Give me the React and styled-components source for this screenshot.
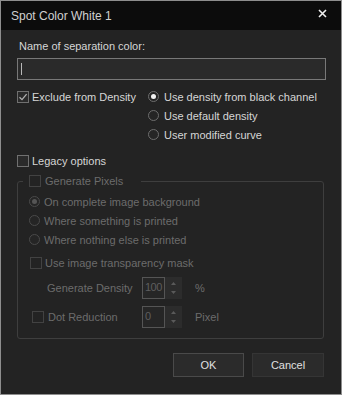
import React from 'react'
import styled, { createGlobalStyle } from 'styled-components'

const Global = createGlobalStyle`
  html, body {
    margin: 0;
    padding: 0;
    background: #232323;
  }
  * { box-sizing: border-box; }
`

const Window = styled.div`
  width: 342px;
  height: 395px;
  border: 1px solid #8e8e8e;
  background: #232323;
  display: flex;
  flex-direction: column;
  font-family: "Liberation Sans", Arial, sans-serif;
  font-size: 11px;
  color: #d6d6d6;
  white-space: nowrap;
`

const TitleBar = styled.div`
  height: 29px;
  background: #0c0c0c;
  display: flex;
  align-items: center;
  justify-content: space-between;
  padding: 0 14px 4px 10px;
`

const Title = styled.div`
  font-size: 12px;
  color: #d0d0d0;
  padding-top: 5px;
`

const Close = styled.div`
  width: 9px;
  height: 9px;
  margin-bottom: 1px;
  display: flex;
`

const Body = styled.div`
  display: flex;
  flex-direction: column;
  padding: 0 15px 0 16px;
`

const Label = styled.div`
  margin-top: 8px;
  line-height: 16px;
  padding-left: 2px;
`

const TextInput = styled.div`
  margin-top: 4px;
  height: 22px;
  border: 1px solid #787878;
  background: #2a2a2a;
  display: flex;
  align-items: center;
  padding-left: 3px;
`

const Caret = styled.span`
  width: 1px;
  height: 12px;
  background: #b8b8b8;
`

const DensityRow = styled.div`
  margin-top: 7px;
  display: grid;
  grid-template-columns: 131px 1fr;
`

const Column = styled.div`
  display: flex;
  flex-direction: column;
`

const Row = styled.div`
  height: ${p => p.h || 19}px;
  display: flex;
  align-items: center;
  gap: ${p => p.gap ?? 3}px;
  margin-top: ${p => p.mt || 0}px;
  padding-left: ${p => p.pl || 0}px;
  color: ${p => (p.disabled ? '#6c6c6c' : '#d6d6d6')};
`

const Box = styled.span`
  width: 12px;
  height: 12px;
  flex: none;
  border: 1px solid ${p => (p.disabled ? '#424242' : '#707070')};
  background: ${p => (p.disabled ? '#232323' : '#2a2a2a')};
  display: flex;
  align-items: center;
  justify-content: center;
`

const Radio = styled.span`
  width: 11px;
  height: 11px;
  flex: none;
  border-radius: 50%;
  border: 1px solid ${p => (p.disabled ? '#4a4a4a' : '#6e6e6e')};
  background: #252525;
  display: flex;
  align-items: center;
  justify-content: center;
  margin-right: 1px;
  &::after {
    content: '';
    display: ${p => (p.on ? 'block' : 'none')};
    width: 5px;
    height: 5px;
    border-radius: 50%;
    background: ${p => (p.disabled ? '#555' : '#f2f2f2')};
  }
`

const Group = styled.fieldset`
  margin: 4px 2px 0 0;
  padding: 4px 10px 10px 11px;
  border: 1px solid #3e3e3e;
  border-radius: 3px;
  min-width: 0;
`

const Legend = styled.legend`
  padding: 0 18px 0 6px;
  margin-left: -6px;
  height: 14px;
  display: flex;
  align-items: center;
  gap: 4px;
  color: #6c6c6c;
`

const FieldGrid = styled.div`
  display: grid;
  grid-template-columns: 113px 40px auto;
  align-items: center;
  margin-top: ${p => p.mt || 0}px;
  color: #6c6c6c;
`

const FieldLabel = styled.div`
  display: flex;
  align-items: center;
  gap: 4px;
  padding-left: ${p => p.pl || 0}px;
`

const Spin = styled.div`
  display: flex;
  height: 22px;
  width: 40px;
`

const SpinText = styled.div`
  width: 23px;
  border: 1px solid #555;
  background: #262626;
  color: #5e5e5e;
  padding: 2px 0 0 2px;
  line-height: 14px;
  overflow: hidden;
  letter-spacing: -0.5px;
`

const SpinButtons = styled.div`
  width: 17px;
  background: #2c2c2c;
  display: flex;
  flex-direction: column;
  align-items: center;
  justify-content: space-around;
  padding: 2px 0;
`

const Unit = styled.div`
  padding-left: 13px;
`

const ButtonRow = styled.div`
  display: flex;
  justify-content: flex-end;
  gap: 8px;
  margin-top: 14px;
  padding-right: 2px;
`

const Button = styled.div`
  width: ${p => p.w}px;
  height: 24px;
  border: 1px solid ${p => (p.primary ? '#4a4a4a' : '#353535')};
  background: #2b2b2b;
  color: #e0e0e0;
  display: flex;
  align-items: center;
  justify-content: center;
`

const Check = () => (
  <svg width="10" height="10" viewBox="0 0 10 10">
    <path d="M1.5 5.2 L4 7.6 L8.6 2.2" fill="none" stroke="#b0b0b0" strokeWidth="1.3" />
  </svg>
)

const Arrow = ({ down }) => (
  <svg width="5" height="3" viewBox="0 0 5 3">
    <path d={down ? 'M0 0 L5 0 L2.5 3 Z' : 'M0 3 L5 3 L2.5 0 Z'} fill="#5a5a5a" />
  </svg>
)

function SpinBox({ value }) {
  return (
    <Spin>
      <SpinText>{value}</SpinText>
      <SpinButtons>
        <Arrow />
        <Arrow down />
      </SpinButtons>
    </Spin>
  )
}

export default function App() {
  return (
    <>
      <Global />
      <Window>
        <TitleBar>
          <Title>Spot Color White 1</Title>
          <Close>
            <svg width="9" height="9" viewBox="0 0 9 9">
              <path d="M1 1 L8 8 M8 1 L1 8" stroke="#f0f0f0" strokeWidth="1.6" />
            </svg>
          </Close>
        </TitleBar>
        <Body>
          <Label>Name of separation color:</Label>
          <TextInput>
            <Caret />
          </TextInput>

          <DensityRow>
            <Column>
              <Row>
                <Box><Check /></Box>
                Exclude from Density
              </Row>
            </Column>
            <Column>
              <Row gap={4}><Radio on />Use density from black channel</Row>
              <Row gap={4}><Radio />Use default density</Row>
              <Row gap={4}><Radio />User modified curve</Row>
            </Column>
          </DensityRow>

          <Row mt={7}>
            <Box />
            Legacy options
          </Row>

          <Group>
            <Legend>
              <Box disabled />
              Generate Pixels
            </Legend>
            <Row disabled gap={3}><Radio disabled on />On complete image background</Row>
            <Row disabled gap={3}><Radio disabled />Where something is printed</Row>
            <Row disabled gap={3}><Radio disabled />Where nothing else is printed</Row>
            <Row disabled mt={4} pl={1}>
              <Box disabled />
              Use image transparency mask
            </Row>
            <FieldGrid mt={5}>
              <FieldLabel pl={18}>Generate Density</FieldLabel>
              <SpinBox value="100" />
              <Unit>%</Unit>
            </FieldGrid>
            <FieldGrid mt={7}>
              <FieldLabel pl={3}>
                <Box disabled />
                Dot Reduction
              </FieldLabel>
              <SpinBox value="0" />
              <Unit>Pixel</Unit>
            </FieldGrid>
          </Group>

          <ButtonRow>
            <Button primary w={71}>OK</Button>
            <Button w={72}>Cancel</Button>
          </ButtonRow>
        </Body>
      </Window>
    </>
  )
}
